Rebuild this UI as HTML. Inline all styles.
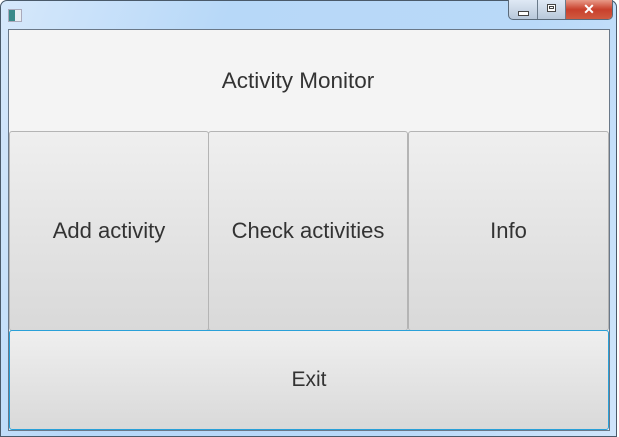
<!DOCTYPE html>
<html><head><style>
body{margin:0;width:619px;height:437px;overflow:hidden;font-family:"Liberation Sans",sans-serif;position:relative;}
.win{position:absolute;left:0;top:0;width:617px;height:437px;border-radius:7px 7px 0 0;box-shadow:inset 0 0 0 1px #4a5a6a;background:linear-gradient(110deg,#d6e8fb 0%,#b7d8f8 30%,#b9d9f8 70%,#cfe5fb 100%);}
.client{position:absolute;left:8px;top:29px;width:602px;height:402px;border:1px solid #6a7888;box-sizing:border-box;background:#f4f4f4;}
.hdr{position:absolute;left:0;top:0;width:578px;padding-right:22px;height:101px;display:flex;align-items:center;justify-content:center;font-size:22.5px;color:#333;}
.btn{position:absolute;box-sizing:border-box;border:1px solid #b4b4b4;border-radius:3px;background:linear-gradient(#efefef,#d9d9d9);display:flex;align-items:center;justify-content:center;font-size:22px;color:#333;}
.ctl{position:absolute;top:0;height:19px;}
</style></head><body>
<div class="win">
<div style="position:absolute;left:8px;top:9px;width:12px;height:11px;border:1px solid #aab;background:linear-gradient(90deg,#3a8a8a 50%,#e8eef4 50%)"></div>
<div class="ctl" style="left:508px;width:103px;border:1px solid #5a6a7a;border-top:none;border-radius:0 0 5px 5px;background:linear-gradient(#dfe9f5,#b8c8da);overflow:hidden">
 <div style="position:absolute;left:0;top:0;width:28px;height:19px;border-right:1px solid #6a7a8a"></div>
 <div style="position:absolute;left:9px;top:11px;width:9px;height:3px;border:1px solid #444;background:#fff"></div>
 <div style="position:absolute;left:29px;top:0;width:27px;height:19px;border-right:1px solid #6a7a8a"></div>
 <div style="position:absolute;left:38px;top:4px;width:7px;height:6px;border:1px solid #444;background:#fff"><div style="margin:1px;width:5px;height:3px;border:1px solid #444;box-sizing:border-box"></div></div>
 <div style="position:absolute;left:57px;top:0;width:46px;height:19px;background:linear-gradient(#e89a88,#c8402c 50%,#d05a40);color:#fff;font-weight:bold;font-size:14px;text-align:center;line-height:18px">✕</div>
</div>
</div>
<div class="client">
 <div class="hdr">Activity Monitor</div>
 <div class="btn" style="left:0;top:101px;width:200px;height:200px">Add activity</div>
 <div class="btn" style="left:199px;top:101px;width:200px;height:200px">Check activities</div>
 <div class="btn" style="left:399px;top:101px;width:201px;height:200px">Info</div>
 <div class="btn" style="left:0;top:300px;width:600px;height:100px;border:1px solid #29a0d8;font-size:21px">Exit</div>
</div>
</body></html>
